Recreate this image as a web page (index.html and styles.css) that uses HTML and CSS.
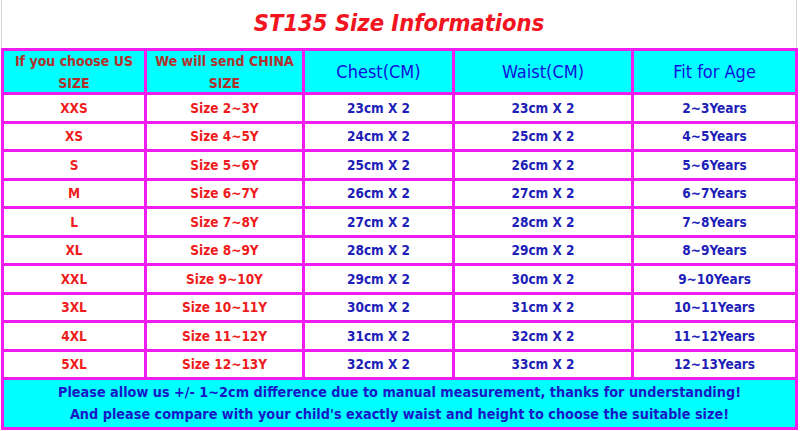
FILE: index.html
```html
<!DOCTYPE html>
<html>
    <head>
        <link rel="stylesheet" href="styles.css">
    </head>
    <body>
        <div class='title'>ST135 Size Informations</div>

        <div class='chart'>
            <div class='cell head us'>If you choose US<br/>SIZE</div>
            <div class='cell head us'>We will send CHINA<br/>SIZE</div>
            <div class='cell head'>Chest(CM)</div>
            <div class='cell head'>Waist(CM)</div>
            <div class='cell head'>Fit for Age</div>

            <div class='cell red'>XXS</div>
            <div class='cell red'>Size 2~3Y</div>
            <div class='cell blue'>23cm X 2</div>
            <div class='cell blue'>23cm X 2</div>
            <div class='cell blue'>2~3Years</div>

            <div class='cell red'>XS</div>
            <div class='cell red'>Size 4~5Y</div>
            <div class='cell blue'>24cm X 2</div>
            <div class='cell blue'>25cm X 2</div>
            <div class='cell blue'>4~5Years</div>

            <div class='cell red'>S</div>
            <div class='cell red'>Size 5~6Y</div>
            <div class='cell blue'>25cm X 2</div>
            <div class='cell blue'>26cm X 2</div>
            <div class='cell blue'>5~6Years</div>

            <div class='cell red'>M</div>
            <div class='cell red'>Size 6~7Y</div>
            <div class='cell blue'>26cm X 2</div>
            <div class='cell blue'>27cm X 2</div>
            <div class='cell blue'>6~7Years</div>

            <div class='cell red'>L</div>
            <div class='cell red'>Size 7~8Y</div>
            <div class='cell blue'>27cm X 2</div>
            <div class='cell blue'>28cm X 2</div>
            <div class='cell blue'>7~8Years</div>

            <div class='cell red'>XL</div>
            <div class='cell red'>Size 8~9Y</div>
            <div class='cell blue'>28cm X 2</div>
            <div class='cell blue'>29cm X 2</div>
            <div class='cell blue'>8~9Years</div>

            <div class='cell red'>XXL</div>
            <div class='cell red'>Size 9~10Y</div>
            <div class='cell blue'>29cm X 2</div>
            <div class='cell blue'>30cm X 2</div>
            <div class='cell blue'>9~10Years</div>

            <div class='cell red'>3XL</div>
            <div class='cell red'>Size 10~11Y</div>
            <div class='cell blue'>30cm X 2</div>
            <div class='cell blue'>31cm X 2</div>
            <div class='cell blue'>10~11Years</div>

            <div class='cell red'>4XL</div>
            <div class='cell red'>Size 11~12Y</div>
            <div class='cell blue'>31cm X 2</div>
            <div class='cell blue'>32cm X 2</div>
            <div class='cell blue'>11~12Years</div>

            <div class='cell red'>5XL</div>
            <div class='cell red'>Size 12~13Y</div>
            <div class='cell blue'>32cm X 2</div>
            <div class='cell blue'>33cm X 2</div>
            <div class='cell blue'>12~13Years</div>

            <div class='cell note'>
                Please allow us +/- 1~2cm difference due to manual measurement, thanks for understanding!<br/>
                And please compare with your child's exactly waist and height to choose the suitable size!
            </div>
        </div>
    </body>
</html>
```

FILE: styles.css
```css
body {
    margin: 0;
    background: white;
    font-family: 'DejaVu Sans Condensed', 'DejaVu Sans', sans-serif;
    font-stretch: condensed;
}

.title {
    width: 796px;
    height: 48px;
    margin-left: 1px;
    border-left: 1px solid #d4d4d4;
    border-right: 1px solid #d4d4d4;
    box-sizing: border-box;
    text-align: center;
    color: #f2141e;
    font-size: 23.5px;
    font-weight: bold;
    font-style: italic;
    line-height: 46px;
}

.chart {
    display: grid;
    grid-template-columns: 143px 158px 150px 179px 164px;
    grid-template-rows: 44px repeat(10, 28.5px) 50px;
    margin-left: 1px;
    width: 797px;
    box-sizing: border-box;
    border-top: 3px solid #f01cf0;
    border-left: 3px solid #f01cf0;
}

.cell {
    display: flex;
    align-items: center;
    justify-content: center;
    text-align: center;
    box-sizing: border-box;
    border-right: 3px solid #f01cf0;
    border-bottom: 3px solid #f01cf0;
    font-weight: bold;
    font-size: 13.5px;
}

.head {
    background: #00ffff;
    color: #1010dc;
    font-weight: normal;
    font-size: 18px;
}

.head.us {
    color: #b3312c;
    font-weight: bold;
    font-size: 14px;
    line-height: 22px;
}

.red {
    color: #ee1c1c;
}

.blue {
    color: #1e1eb8;
}

.note {
    grid-column: 1 / -1;
    background: #00ffff;
    color: #1818c8;
    font-size: 14.3px;
    line-height: 22px;
    padding-bottom: 2px;
}
```
